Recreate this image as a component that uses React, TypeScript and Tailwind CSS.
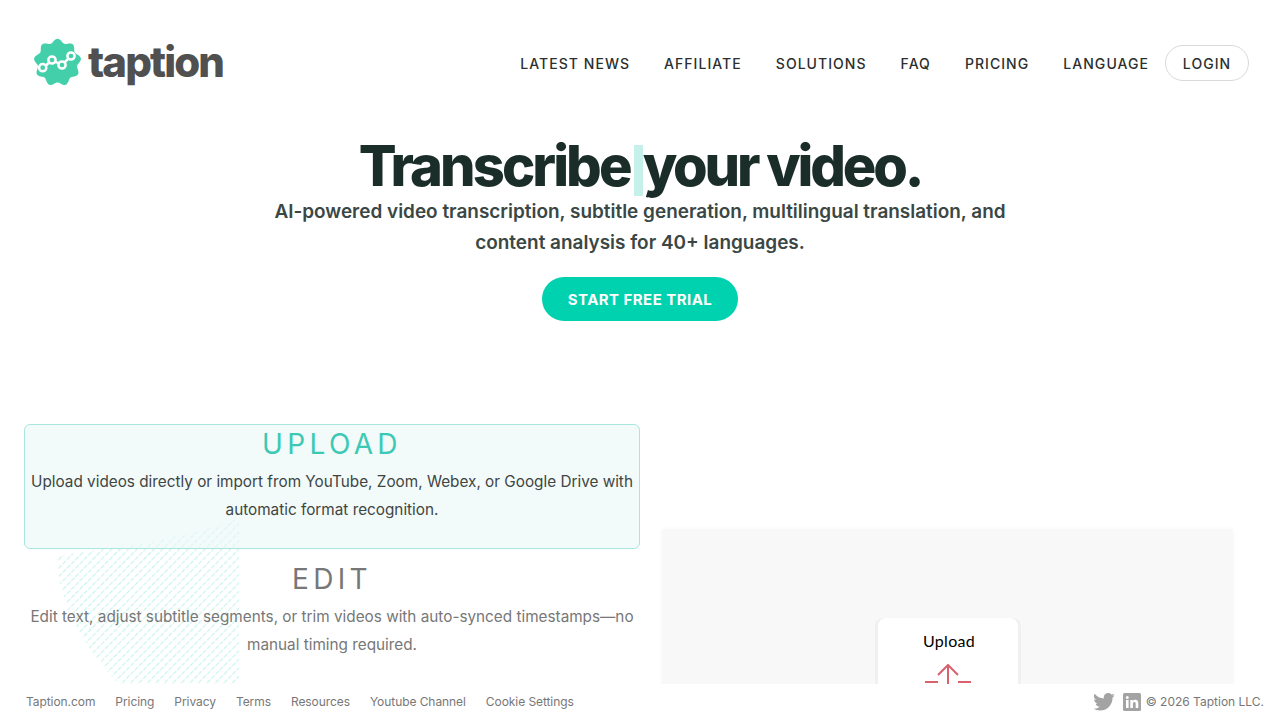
import React from "react";

const inter = { fontFamily: "Inter, 'Liberation Sans', sans-serif" };

function starPath() {
  const cx = 23.5, cy = 24.5;
  let d = "";
  for (let i = 0; i <= 180; i++) {
    const t = (i / 180) * Math.PI * 2;
    const r = 21.8 + 1.9 * Math.cos(9 * t);
    const a = t - Math.PI / 2;
    d += `${i === 0 ? "M" : "L"}${(cx + r * Math.cos(a)).toFixed(2)} ${(cy + r * Math.sin(a)).toFixed(2)}`;
  }
  return d + "Z";
}

function Logo() {
  return (
    <svg width="48" height="50" viewBox="0 0 48 50" className="shrink-0">
      <path d={starPath()} fill="#43cfa9" />
      <path d="M9 30L18 22L28 27L37 18" fill="none" stroke="#fff" strokeWidth="2.500" />
      {[[8.7, 29.7], [18, 22], [28, 27], [37, 18]].map(([x, y]) => (
        <circle key={x} cx={x} cy={y} r="3.600" fill="#43cfa9" stroke="#fff" strokeWidth="2.500" />
      ))}
    </svg>
  );
}

function Hatch() {
  return (
    <svg width="182" height="166" viewBox="0 0 182 166" className="absolute left-[33px] top-[94px]">
      <defs>
        <pattern id="h" width="6" height="6" patternUnits="userSpaceOnUse" patternTransform="rotate(45)">
          <rect width="1.200" height="4.500" fill="#a5ecdf" />
        </pattern>
      </defs>
      <path d="M182 0 L182 166 L62 166 C36 140 0 90 0 38 C50 30 120 24 182 0Z" fill="url(#h)" opacity="0.6" />
    </svg>
  );
}

function Feature({ title, text, active }: { title: string; text: string; active?: boolean }) {
  return (
    <div
      className={
        active
          ? "relative rounded-md border border-[#a9e6e0] bg-[#e9f9f6]/60 h-[125px] pt-[2px] text-center px-1"
          : "relative border border-transparent h-[125px] pt-[2px] text-center px-1"
      }
    >
      <h3
        className={
          active
            ? "text-[28px] leading-[34px] tracking-[0.155em] text-[#3cc9b4] font-normal"
            : "text-[28px] leading-[34px] tracking-[0.155em] text-[#777777] font-normal"
        }
      >
        {title}
      </h3>
      <p className={active ? "mt-[7px] text-[15.3px] leading-7 text-[#3f4543]" : "mt-[7px] text-[15.3px] leading-7 text-[#777777]"}>{text}</p>
    </div>
  );
}

export default function App() {
  const nav = ["LATEST NEWS", "AFFILIATE", "SOLUTIONS", "FAQ", "PRICING", "LANGUAGE"];
  const links = ["Taption.com", "Pricing", "Privacy", "Terms", "Resources", "Youtube Channel", "Cookie Settings"];
  return (
    <div style={inter} className="h-[720px] w-[1280px] overflow-hidden bg-white flex flex-col">
      <header className="h-[126px] shrink-0 flex items-start justify-between pl-[34px] pr-[31px]">
        <div className="flex items-center gap-[6px] pt-[38px]">
          <Logo />
          <span className="mb-[2px] text-[42px] leading-[46px] font-extrabold tracking-[-0.045em] text-[#505050]">taption</span>
        </div>
        <nav className="flex items-center pt-[45px]">
          <div className="flex items-center gap-[34px] pr-[16px] pt-px text-sm tracking-[0.075em] font-medium text-[#2c2f2e]">
            {nav.map((n) => (
              <span key={n}>{n}</span>
            ))}
          </div>
          <span className="h-9 w-[84px] pt-px flex items-center justify-center rounded-full border border-[#d9d9d9] text-sm tracking-[0.075em] font-medium text-[#2c2f2e]">
            LOGIN
          </span>
        </nav>
      </header>

      <section className="h-[298px] shrink-0 flex flex-col items-center text-center">
        <h1 className="pt-[11px] text-[56px] leading-[59px] font-extrabold tracking-[-0.057em] text-[#1b2d28] whitespace-nowrap flex">
          <span className="tracking-[-0.052em]">Transcribe</span>
          <span className="ml-[4px] w-[9px] h-[51px] self-end bg-[#c6f0ea]" />
          <span>your video.</span>
        </h1>
        <p className="w-[760px] text-[18.95px] leading-[31px] font-semibold text-[#3b4744]">
          AI-powered video transcription, subtitle generation, multilingual translation, and content analysis for 40+ languages.
        </p>
        <button className="mt-[19px] h-11 w-[196px] pt-[2px] rounded-full bg-[#00d1ae] text-white text-[15px] font-bold tracking-[0.03em]">
          START FREE TRIAL
        </button>
      </section>

      <main className="flex-1 min-h-0 overflow-hidden flex pl-6 pr-[47px] gap-[22px]">
        <div className="relative w-[616px] shrink-0 flex flex-col gap-[10px]">
          <Hatch />
          <Feature
            active
            title="UPLOAD"
            text="Upload videos directly or import from YouTube, Zoom, Webex, or Google Drive with automatic format recognition."
          />
          <Feature
            title="EDIT"
            text="Edit text, adjust subtitle segments, or trim videos with auto-synced timestamps—no manual timing required."
          />
        </div>
        <div className="flex-1 mt-[105px] h-[400px] rounded-sm bg-[#f8f8f8] shadow-[0_0_4px_rgba(0,0,0,0.04)] flex justify-center pt-[89px]">
          <div className="w-[140px] h-[200px] ml-[1px] rounded-lg bg-white shadow-[-3px_0_0_#f0f0f0,3px_0_0_#f0f0f0] flex flex-col items-center">
            <span style={{ fontFamily: "Lato, sans-serif" }} className="mt-[13px] ml-[2px] text-base leading-5 text-black tracking-[0.02em]">
              Upload
            </span>
            <svg width="48" height="30" viewBox="0 0 48 30" className="mt-[13px]">
              <path d="M24 1V22M14 11L24 1L34 11M1 18H14M34 18H47" fill="none" stroke="#d9606c" strokeWidth="2" />
            </svg>
          </div>
        </div>
      </main>

      <footer className="h-9 shrink-0 flex items-center justify-between pl-[26px] pr-4 text-xs text-[#777777]">
        <div className="flex gap-5 tracking-[-0.07px]">
          {links.map((l) => (
            <span key={l}>{l}</span>
          ))}
        </div>
        <div className="flex items-center gap-[8px]">
          <svg width="22" height="18" viewBox="0 0 24 20" fill="#a3a3a3">
            <path d="M24 2.4c-.9.4-1.8.7-2.8.8 1-.6 1.8-1.6 2.2-2.7-1 .6-2 1-3.1 1.2A4.9 4.9 0 0 0 11.9 6.200 14 14 0 0 1 1.700.900a4.900 4.900 0 0 0 1.500 6.600c-.8 0-1.600-.2-2.200-.6v.1c0 2.400 1.700 4.400 3.900 4.800-.7.2-1.500.2-2.200.1.600 2 2.400 3.400 4.600 3.400A9.900 9.900 0 0 1 0 17.300 14 14 0 0 0 7.500 19.500c9.100 0 14-7.500 14-14v-.6c1-.7 1.800-1.600 2.500-2.500z" />
          </svg>
          <div className="flex items-center gap-[5px]">
            <svg width="18" height="18" viewBox="0 0 18 18">
              <rect width="18" height="18" rx="1.500" fill="#a3a3a3" />
              <path d="M3 7h2.600v8H3zM4.300 3a1.500 1.500 0 1 1 0 3 1.500 1.500 0 0 1 0-3zM7.300 7h2.500v1.100c.5-.8 1.400-1.300 2.500-1.300 2.200 0 3 1.400 3 3.500V15h-2.600v-4.200c0-1-.3-1.800-1.300-1.800s-1.500.8-1.500 1.800V15H7.300z" fill="#fff" />
            </svg>
            <span>© 2026 Taption LLC.</span>
          </div>
        </div>
      </footer>
    </div>
  );
}
